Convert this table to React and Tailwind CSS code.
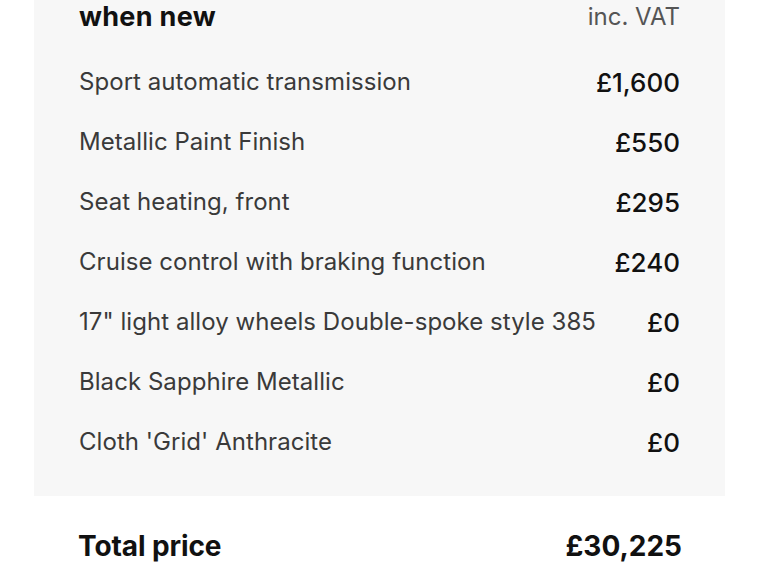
export default function App() {
  const rows = [
    ["Sport automatic transmission", "£1,600"],
    ["Metallic Paint Finish", "£550"],
    ["Seat heating, front", "£295"],
    ["Cruise control with braking function", "£240"],
    ['17" light alloy wheels Double-spoke style 385', "£0"],
    ["Black Sapphire Metallic", "£0"],
    ["Cloth 'Grid' Anthracite", "£0"],
  ];
  return (
    <div className="w-[759px] h-[569px] overflow-hidden bg-white" style={{ fontFamily: "Inter, 'Noto Sans', sans-serif" }}>
      <div className="ml-[34px] w-[691px] bg-[#f7f7f7] px-[45px] pb-[24px]">
        <div className="flex h-[34px] items-center justify-between mb-[18px]">
          <span className="text-[27px] font-bold text-[#111] tracking-[0.3px]">when new</span>
          <span className="text-[24px] text-[#555]">inc. VAT</span>
        </div>
        {rows.map(([l, p], i) => (
          <div key={i} className="flex h-[60px] items-center justify-between">
            <span className="text-[24px] text-[#3a3a3a] tracking-[0.05px] whitespace-nowrap">{l}</span>
            <span className="text-[26px] font-medium text-[#111]">{p}</span>
          </div>
        ))}
      </div>
      <div className="ml-[78px] w-[604px] mt-[34px] flex h-[32px] items-center justify-between">
        <span className="text-[28px] font-bold text-[#111] tracking-[-0.1px]">Total price</span>
        <span className="text-[28px] font-bold text-[#111]">£30,225</span>
      </div>
      <div className="ml-[78px] mt-[8px] text-[22px] text-[#666]">inc. VAT</div>
    </div>
  );
}
